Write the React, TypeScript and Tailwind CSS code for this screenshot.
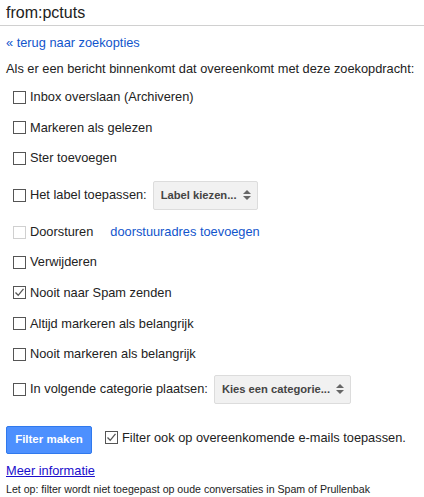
import React from "react";

type Row = {
  label: string;
  checked?: boolean;
  disabled?: boolean;
  h: string;
  extra?: React.ReactNode;
};

const Box = ({ checked, disabled }: { checked?: boolean; disabled?: boolean }) => (
  <span
    className={`flex h-[13px] w-[13px] shrink-0 items-center justify-center border bg-white ${
      disabled ? "border-[#d0d0d0]" : "border-[#555]"
    }`}
  >
    {checked && (
      <svg width="11" height="11" viewBox="0 0 11 11">
        <path d="M1.5 5.5 L4.2 8.3 L9.5 1.8" fill="none" stroke="#555" strokeWidth="1.3" />
      </svg>
    )}
  </span>
);

const Select = ({ text, w }: { text: string; w: string }) => (
  <div
    className={`ml-[6px] flex h-[29px] ${w} items-center justify-between rounded-[2px] border border-[#dcdcdc] bg-[#f1f1f1] pl-[7px] pr-[6px] text-[11.2px] font-bold text-[#444]`}
  >
    <span>{text}</span>
    <svg width="8" height="12" viewBox="0 0 8 12">
      <path d="M0 5 L4 1 L8 5 Z" fill="#666" />
      <path d="M0 7 L4 11 L8 7 Z" fill="#666" />
    </svg>
  </div>
);

const rows: Row[] = [
  { label: "Inbox overslaan (Archiveren)", h: "h-[30px]" },
  { label: "Markeren als gelezen", h: "h-[31px]" },
  { label: "Ster toevoegen", h: "h-[30px]" },
  {
    label: "Het label toepassen:",
    h: "h-[44px]",
    extra: <Select text="Label kiezen..." w="w-[105px]" />,
  },
  {
    label: "Doorsturen",
    disabled: true,
    h: "h-[30px]",
    extra: <span className="ml-[17px] text-[#15c]">doorstuuradres toevoegen</span>,
  },
  { label: "Verwijderen", h: "h-[30px]" },
  { label: "Nooit naar Spam zenden", checked: true, h: "h-[31px]" },
  { label: "Altijd markeren als belangrijk", h: "h-[31px]" },
  { label: "Nooit markeren als belangrijk", h: "h-[30px]" },
  {
    label: "In volgende categorie plaatsen:",
    h: "h-[40px]",
    extra: <Select text="Kies een categorie..." w="w-[137px]" />,
  },
];

export default function App() {
  return (
    <div className="h-[497px] w-[424px] overflow-hidden whitespace-nowrap bg-white font-['Liberation_Sans',Arial,sans-serif] text-[12.8px] text-[#222]">
      {/* header */}
      <div className="flex h-[26px] items-center border-b border-[#d0d0d0] px-[6px] text-[16px] text-[#222]">
        from:pctuts
      </div>
      <div className="flex h-[34px] items-center px-[6px] text-[#15c]">« terug naar zoekopties</div>
      <div className="flex h-[18px] items-center px-[6px]">
        Als er een bericht binnenkomt dat overeenkomt met deze zoekopdracht:
      </div>

      {/* options */}
      <div className="mt-[4px] flex flex-col pl-[13px]">
        {rows.map((r) => (
          <div key={r.label} className={`flex ${r.h} items-center`}>
            <Box checked={r.checked} disabled={r.disabled} />
            <span className="ml-[4px]">{r.label}</span>
            {r.extra}
          </div>
        ))}
      </div>

      {/* footer */}
      <div className="mt-[17px] flex items-start px-[6px]">
        <button className="h-[28px] w-[86px] rounded-[2px] border border-[#3079ed] bg-[#4d90fe] text-[11.5px] font-bold text-white">
          Filter maken
        </button>
        <div className="ml-[13px] mt-[2px] flex items-center">
          <Box checked />
          <span className="ml-[4px]">Filter ook op overeenkomende e-mails toepassen.</span>
        </div>
      </div>
      <div className="mt-[7px] px-[6px] text-[#1a0dcc] underline">Meer informatie</div>
      <div className="mt-[2px] px-[6px] text-[10.6px] text-[#222]">
        Let op: filter wordt niet toegepast op oude conversaties in Spam of Prullenbak
      </div>
    </div>
  );
}
